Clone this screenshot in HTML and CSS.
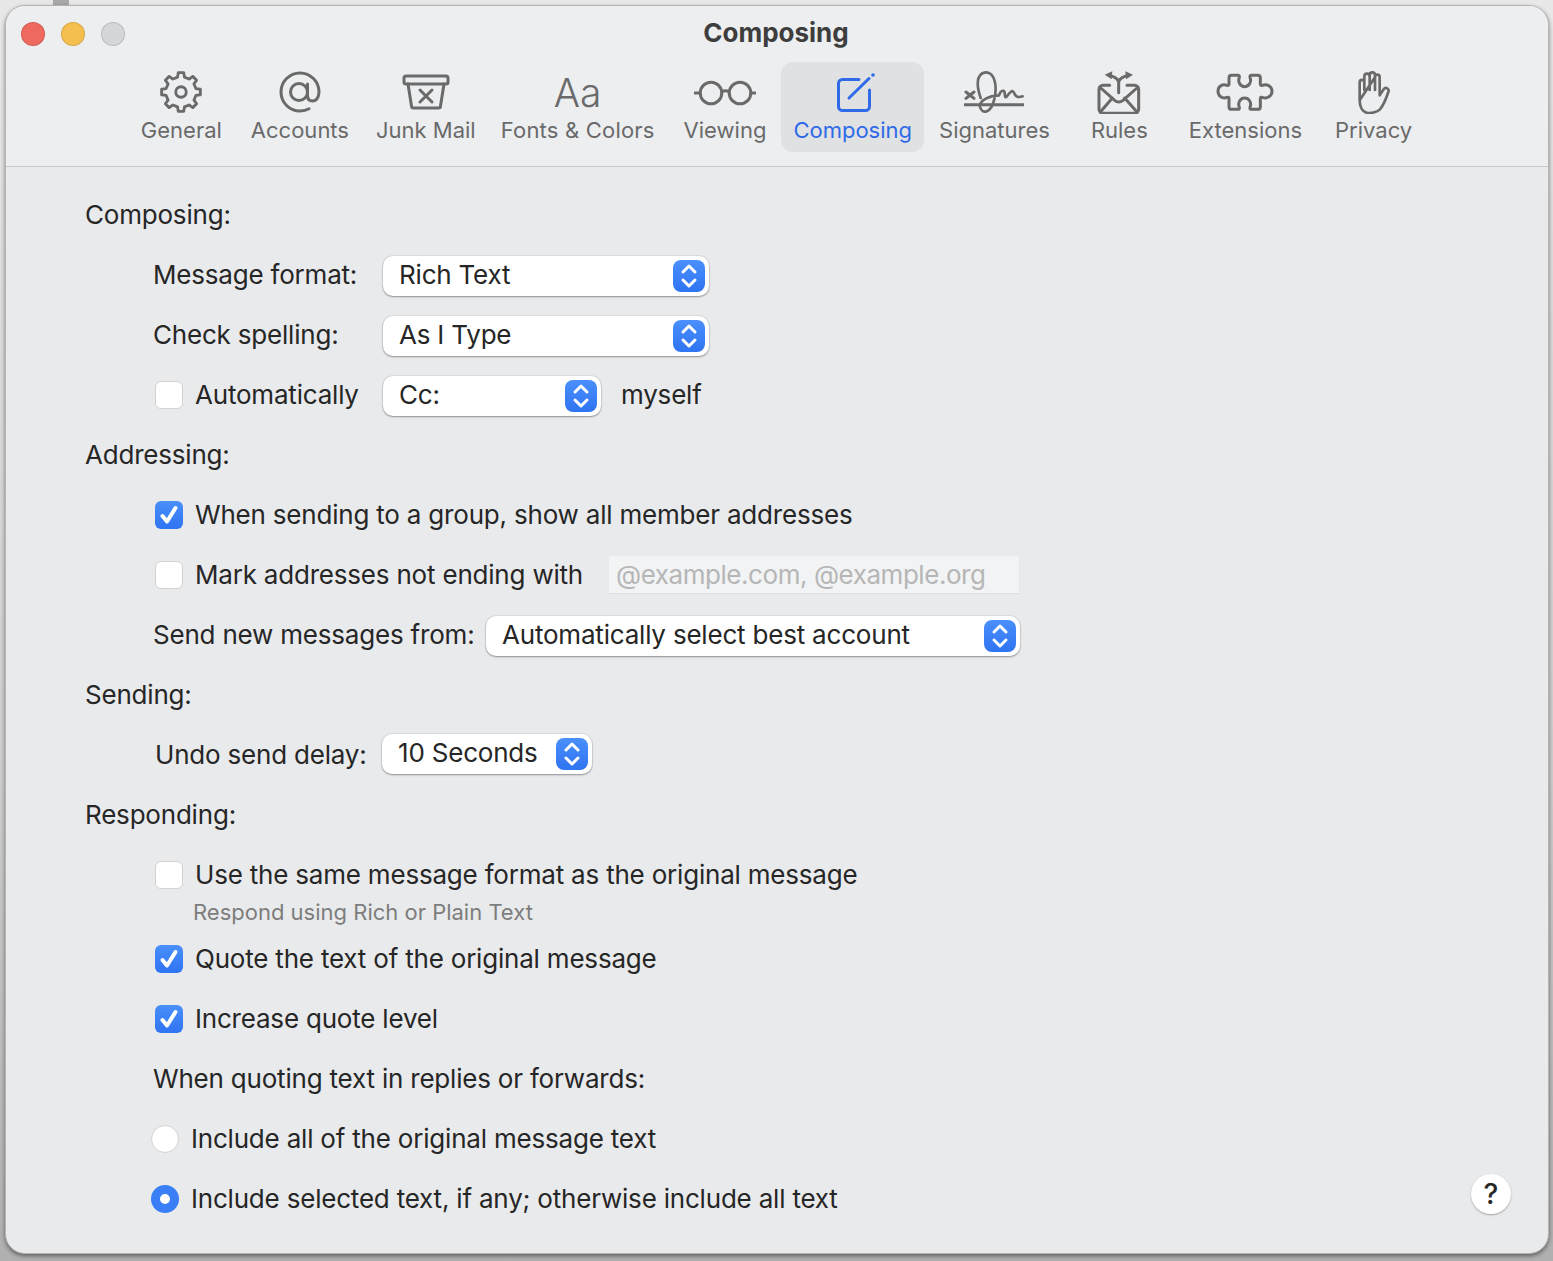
FILE: index.html
```html
<!DOCTYPE html>
<html lang="en">
<head>
    <meta charset="UTF-8">
    <title>Composing</title>
    <link rel="stylesheet" href="styles.css">
</head>
<body>
    <svg class="defs" width="0" height="0">
        <symbol id="updown" viewBox="0 0 32 32">
            <path d="M10 12l6-6 6 6M10 20l6 6 6-6" fill="none" stroke="#fff" stroke-width="3" stroke-linecap="round" stroke-linejoin="round"/>
        </symbol>
        <symbol id="tick" viewBox="0 0 28 28">
            <path d="M7.5 15l4.5 5.5L20.5 7" fill="none" stroke="#fff" stroke-width="4" stroke-linecap="round" stroke-linejoin="round"/>
        </symbol>
    </svg>

    <div class="window">
        <div class="titlebar">
            <div class="lights">
                <span class="light red"></span>
                <span class="light yellow"></span>
                <span class="light grey"></span>
            </div>
            <div class="title">Composing</div>
        </div>

        <ul class="toolbar">
            <li class="tool general">
                <svg class="icon" width="42" height="44" viewBox="0 0 44 44"><path d="M37.59 18.4L42.3 19.15V24.85L37.59 25.6L35.57 30.48L38.37 34.34L34.34 38.37L30.48 35.57L25.6 37.59L24.85 42.3H19.15L18.4 37.59L13.52 35.57L9.66 38.37L5.63 34.34L8.43 30.48L6.41 25.6L1.7 24.85V19.15L6.41 18.4L8.43 13.52L5.63 9.66L9.66 5.63L13.52 8.43L18.4 6.41L19.15 1.7H24.85L25.6 6.41L30.48 8.43L34.34 5.63L38.37 9.66L35.57 13.52Z"/><circle cx="22" cy="22" r="5.5"/></svg>
                <span>General</span>
            </li>
            <li class="tool">
                <svg class="icon" width="44" height="44" viewBox="0 0 44 44"><circle cx="21" cy="22" r="8.5"/><path d="M29.5 14v11.5c0 3.5 2 5.5 5 5.5 4 0 6.5-4 6.5-9 0-10.5-8.5-19-19-19S3 11.5 3 22s8.5 19 19 19c3.5 0 6.5-.8 9-2.2"/></svg>
                <span>Accounts</span>
            </li>
            <li class="tool">
                <svg class="icon" width="48" height="44" viewBox="0 0 48 44"><rect x="2" y="6" width="44" height="8" rx="2"/><path d="M6 14l3.5 22a2 2 0 0 0 2 2h25a2 2 0 0 0 2-2L42 14M18 20l12 12M30 20L18 32"/></svg>
                <span>Junk Mail</span>
            </li>
            <li class="tool fonts">
                <span class="icon-text">Aa</span>
                <span>Fonts &amp; Colors</span>
            </li>
            <li class="tool">
                <svg class="icon" width="62" height="44" viewBox="0 0 62 44"><circle cx="17" cy="23" r="10.8"/><circle cx="46" cy="23" r="10.8"/><path d="M1 23h5M57 23h4M28 21.5q3.500-1.500 7 0"/></svg>
                <span>Viewing</span>
            </li>
            <li class="tool active">
                <svg class="icon" width="44" height="44" viewBox="0 0 44 44"><path d="M28 9.500H11.500a4 4 0 0 0-4 4v23a4 4 0 0 0 4 4h23a4 4 0 0 0 4-4V20M18 28L38 8.500"/><circle class="solid" cx="42" cy="5" r="1.800"/></svg>
                <span>Composing</span>
            </li>
            <li class="tool">
                <svg class="icon thin" width="60" height="44" viewBox="30 24 180 132"><path d="M80 108C70 80 62 35 95 31c30-1 35 49 25 84-8 35-35 45-42 20-4-20 32-35 57-35 5-15 15-18 17-8 1 13 1 16 6 12 7-9 17-24 22-12 5 13 12 16 26 11"/><path d="M36 90l24 19M60 90l-24 19M33 128h175" stroke-width="9"/></svg>
                <span>Signatures</span>
            </li>
            <li class="tool rules">
                <svg class="icon wide" width="46" height="44" viewBox="429 24 138 132"><path d="M470 70h-20a12 12 0 0 0-12 12v60a12 12 0 0 0 12 12h95a12 12 0 0 0 12-12V82a12 12 0 0 0-12-12h-23M440 75l45 40q12 10 25 0l45-40M442 150l36-42M552 150l-37-42M497 92V62c0-12-12-17-27-22M497 62c0-12 12-17 27-22"/><path class="solid" d="M455 38l23-10-2 24zM540 38l-23-10 2 24z"/></svg>
                <span>Rules</span>
            </li>
            <li class="tool">
                <svg class="icon wide" width="58" height="44" viewBox="39 24 174 132"><path d="M86 40h19q5 0 4 6c-6 15 4 28 16 28s22-13 16-28q-1-6 4-6h19q8 0 8 8v18q0 6 6 4c14-6 29 4 29 18s-15 24-29 18q-6-2-6 4v24q0 8-8 8h-19q-5 0-4-6c6-15-4-28-16-28s-22 13-16 28q1 6-4 6H86q-8 0-8-8v-24q0-6-6-4c-14 6-27-4-27-18s13-24 27-18q6 2 6-4V48q0-8 8-8z"/></svg>
                <span>Extensions</span>
            </li>
            <li class="tool privacy">
                <svg class="icon thin" width="34" height="44" viewBox="456 24 102 132"><path d="M464 115V62c0-11 14-11 14 0v22M478 62V44c0-12 16-12 16 0v40M494 44v-4c0-12 16-12 16 0v44M510 46c0-11 14-11 14 0v54l12-18c6-9 18-2 14 8-5 15-15 40-25 52-10 10-30 13-40 10-15-4-21-22-21-37z"/></svg>
                <span>Privacy</span>
            </li>
        </ul>

        <div class="content">
            <div class="heading">Composing:</div>
            <div class="row">
                <label class="field-label">Message format:</label>
                <div class="select size-l"><span>Rich Text</span><i class="spin"><svg><use href="#updown"/></svg></i></div>
            </div>
            <div class="row">
                <label class="field-label">Check spelling:</label>
                <div class="select size-l"><span>As I Type</span><i class="spin"><svg><use href="#updown"/></svg></i></div>
            </div>
            <div class="row">
                <span class="check"></span>
                <label class="check-label field-check">Automatically</label>
                <div class="select size-s"><span>Cc:</span><i class="spin"><svg><use href="#updown"/></svg></i></div>
                <span class="after">myself</span>
            </div>

            <div class="heading">Addressing:</div>
            <div class="row">
                <span class="check on"><svg><use href="#tick"/></svg></span>
                <label class="check-label">When sending to a group, show all member addresses</label>
            </div>
            <div class="row">
                <span class="check"></span>
                <label class="check-label">Mark addresses not ending with</label>
                <div class="textbox">@example.com, @example.org</div>
            </div>
            <div class="row">
                <label class="field-label from">Send new messages from:</label>
                <div class="select size-xl"><span>Automatically select best account</span><i class="spin"><svg><use href="#updown"/></svg></i></div>
            </div>

            <div class="heading">Sending:</div>
            <div class="row">
                <label class="field-label undo">Undo send delay:</label>
                <div class="select size-xs"><span>10 Seconds</span><i class="spin"><svg><use href="#updown"/></svg></i></div>
            </div>

            <div class="heading">Responding:</div>
            <div class="row">
                <span class="check"></span>
                <label class="check-label">Use the same message format as the original message</label>
            </div>
            <div class="hint">Respond using Rich or Plain Text</div>
            <div class="row">
                <span class="check on"><svg><use href="#tick"/></svg></span>
                <label class="check-label">Quote the text of the original message</label>
            </div>
            <div class="row">
                <span class="check on"><svg><use href="#tick"/></svg></span>
                <label class="check-label">Increase quote level</label>
            </div>
            <div class="row">
                <label class="plain-label">When quoting text in replies or forwards:</label>
            </div>
            <div class="row">
                <span class="radio"></span>
                <label class="check-label">Include all of the original message text</label>
            </div>
            <div class="row">
                <span class="radio on"></span>
                <label class="check-label">Include selected text, if any; otherwise include all text</label>
            </div>

            <div class="help">?</div>
        </div>
    </div>
</body>
</html>
```

FILE: styles.css
```css
* {
    margin: 0;
    padding: 0;
    box-sizing: border-box;
}
ul,li {
    list-style: none;
}
html,body {
    height: 100%;
}
body {
    overflow: hidden;
    padding: 5px 4px 7px 5px;
    font-family: "Inter", "Liberation Sans", sans-serif;
    font-size: 26px;
    color: #262626;
    background:
        linear-gradient(#a8a8a8, #a8a8a8) 53px 0 / 16px 5px no-repeat,
        linear-gradient(#e8e8e8 0, #cfcfcf 60%, #b0b0b0 100%);
}
.defs {
    position: absolute;
}
.window {
    height: 100%;
    border: 1px solid #b4b4b4;
    border-radius: 20px;
    overflow: hidden;
    background: #e9eaec;
    box-shadow: 0 2px 4px rgba(0, 0, 0, 0.45);
}

/* title bar */
.titlebar {
    display: grid;
    grid-template-columns: 1fr auto 1fr;
    align-items: center;
    height: 56px;
    padding: 0 17px 0 15px;
    background: #eceef0;
}
.lights {
    display: flex;
    gap: 16px;
}
.light {
    width: 24px;
    height: 24px;
    border-radius: 50%;
    border: 1px solid rgba(0, 0, 0, 0.12);
}
.red { background: #ee6a5f; }
.yellow { background: #f5bf4f; }
.grey { background: #d5d6d8; }
.title {
    padding-bottom: 4px;
    font-size: 26px;
    font-weight: 700;
    color: #3d3d3d;
}

/* toolbar */
.toolbar {
    display: flex;
    justify-content: center;
    gap: 3px;
    height: 105px;
    padding-left: 1px;
    background: #eceef0;
    border-bottom: 1px solid #c9c9c9;
}
.tool {
    display: flex;
    flex-direction: column;
    align-items: center;
    height: 90px;
    padding: 8px 12px;
    border-radius: 12px;
    font-size: 22px;
    line-height: 28px;
    color: #6a6a6a;
}
.tool span:last-child {
    margin-top: 2px;
}
.tool.general {
    margin: 0 2px 0 -2px;
}
.tool.fonts {
    margin: 0 2px 0 -2px;
    letter-spacing: 0.2px;
}
.tool.rules {
    padding: 8px 26px;
}
.tool.privacy {
    margin-left: 6px;
}
.tool.active {
    background: #e0e1e3;
    color: #2f6ae8;
}
.icon {
    flex: none;
    fill: none;
    stroke: currentColor;
    stroke-width: 3;
    stroke-linecap: round;
    stroke-linejoin: round;
}
.icon.thin {
    stroke-width: 8;
}
.icon.wide {
    stroke-width: 9;
}
.icon .solid {
    fill: currentColor;
    stroke: none;
}
.icon-text {
    height: 44px;
    font-size: 39px;
    font-weight: 300;
    line-height: 46px;
    letter-spacing: 0;
}

/* form */
.content {
    position: relative;
    padding: 18px 0 0 80px;
    letter-spacing: -0.2px;
}
.heading {
    display: flex;
    align-items: center;
    height: 60px;
    margin-left: -1px;
    padding-bottom: 2px;
}
.row {
    display: flex;
    align-items: center;
    height: 60px;
    padding-left: 68px;
}
.row label,
.after {
    padding-bottom: 2px;
}
.plain-label {
    margin-left: -1px;
}
.field-label {
    flex: none;
    width: 230px;
    margin-left: -1px;
}
.field-label.from {
    width: 333px;
}
.field-label.undo {
    width: 229px;
    padding-left: 2px;
}
.check {
    flex: none;
    width: 28px;
    height: 28px;
    margin-left: 1px;
    border-radius: 6px;
    background: #fff;
    border: 1px solid #d2d2d2;
}
.check svg {
    display: block;
    width: 28px;
    height: 28px;
}
.check.on {
    border: 0;
    background: linear-gradient(#4a8ffb, #2f74f2);
}
.check-label {
    margin-left: 12px;
}
.field-check {
    width: 188px;
}
.after {
    margin-left: 20px;
}
.radio {
    flex: none;
    width: 28px;
    height: 28px;
    margin-left: -3px;
    border-radius: 50%;
    background: #fff;
    border: 1px solid #d2d2d2;
}
.radio.on {
    border: 9px solid #3a7ff6;
}
.select {
    flex: none;
    display: flex;
    align-items: center;
    justify-content: space-between;
    height: 40px;
    margin-top: 2px;
    padding: 0 4px 0 16px;
    border-radius: 10px;
    background: #fff;
    box-shadow: 0 1px 2px rgba(0, 0, 0, 0.35), 0 0 0 1px rgba(0, 0, 0, 0.05);
}
.select span {
    padding-bottom: 4px;
}
.size-xl { width: 534px; }
.size-l { width: 326px; }
.size-s { width: 218px; }
.size-xs {
    width: 210px;
    margin-top: -2px;
}
.spin {
    flex: none;
    width: 32px;
    height: 32px;
    border-radius: 8px;
    background: linear-gradient(#4a8ffb, #2f74f2);
}
.spin svg {
    display: block;
    width: 32px;
    height: 32px;
}
.textbox {
    flex: none;
    width: 410px;
    height: 38px;
    margin-left: 26px;
    padding-left: 7px;
    line-height: 38px;
    letter-spacing: -0.45px;
    color: #b6b6b6;
    background: #f2f3f4;
    border-bottom: 1px solid #dedede;
}
.hint {
    height: 24px;
    margin: -5px 0 5px 107px;
    font-size: 22px;
    line-height: 24px;
    letter-spacing: 0;
    color: #7d7d7d;
}
.help {
    position: absolute;
    right: 37px;
    top: 1007px;
    width: 40px;
    height: 40px;
    border-radius: 50%;
    background: #fff;
    font-size: 28px;
    font-weight: 500;
    line-height: 40px;
    letter-spacing: 0;
    text-align: center;
    box-shadow: 0 1px 2px rgba(0, 0, 0, 0.3);
}
```
